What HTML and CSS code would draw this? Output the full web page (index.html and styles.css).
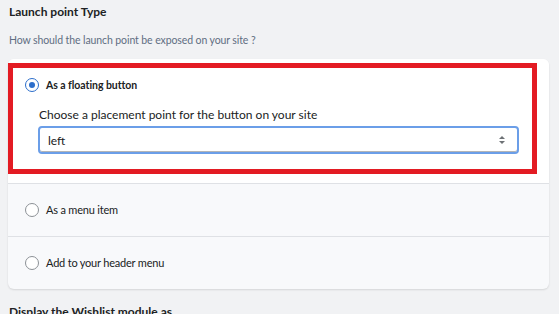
FILE: index.html
```html
<!DOCTYPE html>
<html>
<head>
<meta charset="utf-8">
<link rel="stylesheet" href="styles.css">
</head>
<body>
<div class="page">
  <h2 class="title">Launch point Type</h2>
  <p class="subtitle">How should the launch point be exposed on your site ?</p>
  <div class="card">
    <div class="row row-selected">
      <label class="option">
        <span class="radio radio-on"><span class="dot"></span></span>
        <span class="option-label strong">As a floating button</span>
      </label>
      <div class="nested">
        <div class="field-label">Choose a placement point for the button on your site</div>
        <div class="select">
          <span class="select-value">left</span>
          <svg class="select-arrows" width="8" height="10" viewBox="0 0 8 10"><path d="M4 1 L7 4 H1 Z" fill="#6d7175"/><path d="M4 9 L7 6 H1 Z" fill="#6d7175"/></svg>
        </div>
      </div>
    </div>
    <div class="row">
      <label class="option">
        <span class="radio"></span>
        <span class="option-label">As a menu item</span>
      </label>
    </div>
    <div class="row">
      <label class="option">
        <span class="radio"></span>
        <span class="option-label">Add to your header menu</span>
      </label>
    </div>
  </div>
  <h2 class="title title-next">Display the Wishlist module as</h2>
  <div class="highlight"></div>
</div>
</body>
</html>
```
FILE: styles.css
```css
html, body {
  margin: 0;
  padding: 0;
  background: #f1f2f4;
}
body {
  font-family: "Lato", "Open Sans", sans-serif;
  color: #202223;
  font-size: 12px;
}
.page {
  position: relative;
  padding: 3px 10px 0 8px;
}
.title {
  margin: 0 0 0 1px;
  font-size: 12px;
  font-weight: 700;
  line-height: 18px;
}
.subtitle {
  margin: 10px 0 0 1px;
  font-size: 10.5px;
  letter-spacing: -0.1px;
  line-height: 18px;
  color: #5f6e82;
}
.card {
  margin-top: 10px;
  background: #f8f9fb;
  border-radius: 6px;
  box-shadow: 0 1px 2px rgba(0,0,0,0.12);
  overflow: hidden;
}
.row {
  padding: 16px;
  border-top: 1px solid #dfe1e5;
}
.row:first-child {
  border-top: none;
}
.row-selected {
  background: #ffffff;
  padding-bottom: 29px;
}
.option {
  display: flex;
  align-items: center;
  gap: 7px;
  height: 20px;
}
.radio {
  box-sizing: border-box;
  width: 14px;
  height: 14px;
  border-radius: 50%;
  border: 1px solid #8c9196;
  background: #fff;
  display: flex;
  align-items: center;
  justify-content: center;
  margin-left: 1px;
}
.radio-on {
  border: 1px solid #2c6ecb;
}
.dot {
  width: 6px;
  height: 6px;
  border-radius: 50%;
  background: #2c6ecb;
}
.option-label {
  font-size: 11px;
  letter-spacing: -0.2px;
  line-height: 20px;
}
.strong {
  font-weight: 700;
  font-size: 10.5px;
  letter-spacing: -0.05px;
}
.nested {
  padding: 12px 14px 0 14px;
}
.field-label {
  font-size: 12px;
  line-height: 16px;
  margin-left: 1px;
}
.select {
  box-sizing: border-box;
  margin-top: 3px;
  height: 28px;
  border: 2px solid #6b9ee8;
  border-radius: 4px;
  background: #fff;
  display: flex;
  align-items: center;
  justify-content: space-between;
  padding: 0 11px 0 8px;
  box-shadow: inset 0 -1px 0 #b5b5b5;
}
.select-value {
  font-size: 12px;
}
.title-next {
  margin-top: 14px;
}
.highlight {
  position: absolute;
  left: 8px;
  top: 63px;
  width: 529px;
  height: 111px;
  box-sizing: border-box;
  border: 5px solid #e31b23;
  pointer-events: none;
}
```
